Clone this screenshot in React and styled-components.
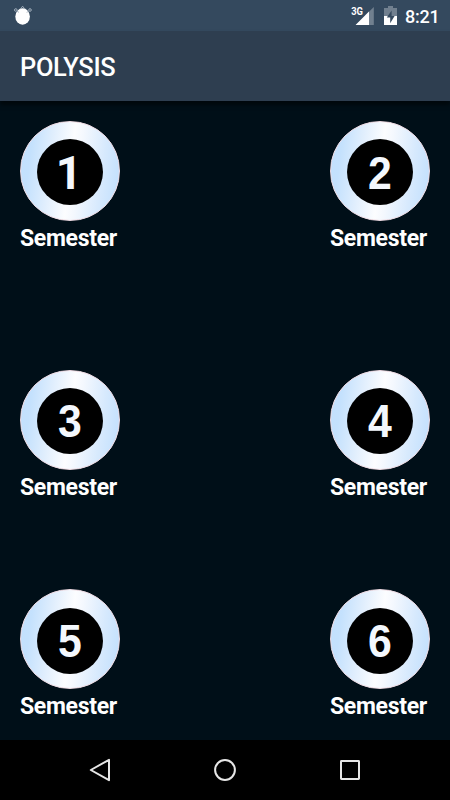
import React from "react"
import styled, { createGlobalStyle } from "styled-components"

const GlobalStyle = createGlobalStyle`
  * {
    box-sizing: border-box;
  }
  body {
    margin: 0;
    background: #000f18;
  }
`

const Screen = styled.main`
  display: flex;
  flex-direction: column;
  width: 450px;
  height: 800px;
  background: #000f18;
  color: white;
  font-family: Roboto, sans-serif;
  overflow: hidden;
`

const StatusBar = styled.header`
  display: flex;
  align-items: flex-start;
  justify-content: space-between;
  height: 31px;
  padding: 4px 11px 0 13px;
  background: #34495e;
`

const StatusIcons = styled.section`
  display: flex;
  align-items: flex-start;
`

const Bug = styled.svg`
  width: 20px;
  height: 22px;
`

const Signal = styled.svg`
  width: 24px;
  height: 22px;
`

const Battery = styled.svg`
  width: 13px;
  height: 19px;
  margin: 2px 8px 0 10px;
`

const Clock = styled.span`
  width: 34px;
  font-size: 18px;
  font-weight: 500;
  line-height: 25px;
  letter-spacing: -0.2px;
  white-space: nowrap;
`

const AppBar = styled.section`
  display: flex;
  align-items: center;
  height: 70px;
  padding-left: 20px;
  background: #2e3e50;
  box-shadow: 0 4px 4px rgba(0, 0, 0, 0.5);
`

const Title = styled.h1`
  margin: 2px 0 0;
  font-size: 25.4px;
  font-weight: 500;
  line-height: 30px;
  letter-spacing: -0.3px;
`

const Content = styled.section`
  flex: 1;
  padding: 20px 20px 0;
`

const Row = styled.section`
  display: flex;
  justify-content: space-between;
  height: ${props => props.$height}px;
`

const Semester = styled.article`
  width: 100px;
`

const Ring = styled.div`
  display: flex;
  justify-content: center;
  width: 100px;
  height: 100px;
  padding-top: ${props => props.$inset}px;
  border: 1px solid #f0dce4;
  border-radius: 50%;
  background: linear-gradient(
    97deg,
    #c2e0fd 0%,
    #c4e1fd 12%,
    #e2effd 32%,
    #fcfdff 50%,
    #f4f8fe 58%,
    #d6e9fd 80%,
    #bedefd 100%
  );
`

const Disc = styled.div`
  display: flex;
  justify-content: center;
  width: 66px;
  height: 66px;
  border-radius: 50%;
  background: black;
`

// The 1 is drawn without a foot, so it takes the other face
const Digit = styled.span`
  margin-right: ${props => (props.$footless ? 2 : 0)}px;
  font-family: ${props =>
    props.$footless ? "Roboto, sans-serif" : '"Liberation Sans", sans-serif'};
  font-size: 46px;
  font-weight: 700;
  line-height: ${props => props.$line}px;
  color: #f4f8fd;
  transform: scaleX(${props => (props.$footless ? 1 : 0.93)});
`

const Label = styled.p`
  margin: 4px 0 0;
  font-size: 23px;
  font-weight: 700;
  line-height: 27px;
  letter-spacing: -0.3px;
  white-space: nowrap;
`

const NavBar = styled.nav`
  display: flex;
  align-items: center;
  justify-content: space-between;
  height: 60px;
  padding: 0 88px;
  background: black;
`

const NavIcon = styled.svg`
  width: 24px;
  height: 24px;
  fill: none;
  stroke: #e6e6e6;
  stroke-width: 2;
  stroke-linejoin: round;
`

const rows = [
  { numbers: [1, 2], height: 249, inset: 17.4, line: 68 },
  { numbers: [3, 4], height: 219, inset: 17.4, line: 66 },
  { numbers: [5, 6], height: 151, inset: 18, line: 66 },
]

// Small bug head shown by android for usb debugging
const DebugIcon = () => (
  <Bug viewBox="0 0 20 22">
    <ellipse cx="9.6" cy="12.5" rx="7.3" ry="8.3" fill="#fff" />
    <g fill="none" stroke="#a9b6c2" strokeWidth="0.9">
      <circle cx="2.8" cy="6" r="1.3" />
      <circle cx="17" cy="6" r="1.3" />
      <path d="M4 7.2l2 1.2M15.6 7.2l-2 1.2M7.3 5.2l2.3-3 2.3 3" />
    </g>
  </Bug>
)

const SignalIcon = () => (
  <Signal viewBox="0 0 24 22">
    <path d="M23.8 3v18H5.6Z" fill="#71808f" />
    <path d="M19 7.4V21H5.6Z" fill="#fff" />
    <text
      x="1.2"
      y="11.2"
      fontFamily="Roboto, sans-serif"
      fontSize="10.8"
      fontWeight="700"
      fill="#fff"
      stroke="#34495e"
      strokeWidth="1.4"
      paintOrder="stroke"
      textLength="11.8"
      lengthAdjust="spacingAndGlyphs"
    >
      3G
    </text>
  </Signal>
)

const BatteryIcon = () => (
  <Battery viewBox="0 0 13 19">
    <path d="M4 0h5v2h4v8H0V2h4Z" fill="#71808f" />
    <path d="M0 10h13v9H0Z" fill="#fff" />
    <path d="M7.6 4.6L2.8 11.6h3.4v5.6L10.6 10H7.6Z" fill="#34495e" />
  </Battery>
)

const App = () => {
  return (
    <Screen>
      <GlobalStyle />

      <StatusBar>
        <DebugIcon />
        <StatusIcons>
          <SignalIcon />
          <BatteryIcon />
          <Clock>8:21</Clock>
        </StatusIcons>
      </StatusBar>

      <AppBar>
        <Title>POLYSIS</Title>
      </AppBar>

      <Content>
        {rows.map(row => (
          <Row key={row.height} $height={row.height}>
            {row.numbers.map(number => (
              <Semester key={number}>
                <Ring $inset={row.inset}>
                  <Disc>
                    <Digit $footless={number === 1} $line={row.line}>
                      {number}
                    </Digit>
                  </Disc>
                </Ring>
                <Label>Semester</Label>
              </Semester>
            ))}
          </Row>
        ))}
      </Content>

      <NavBar>
        <NavIcon viewBox="0 0 24 24">
          <path d="M21 1.8V22.2L2.8 12Z" />
        </NavIcon>
        <NavIcon viewBox="0 0 24 24">
          <circle cx="12" cy="12" r="9.9" />
        </NavIcon>
        <NavIcon viewBox="0 0 24 24">
          <rect x="3" y="3" width="18" height="18" rx="0.4" />
        </NavIcon>
      </NavBar>
    </Screen>
  )
}

export default App
